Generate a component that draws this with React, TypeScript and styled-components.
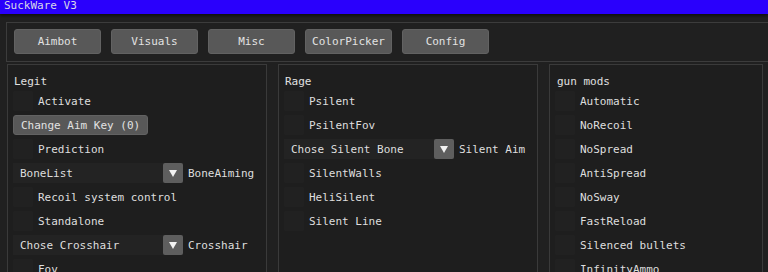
import React from 'react';
import styled, { createGlobalStyle } from 'styled-components';

const GlobalStyle = createGlobalStyle`
  html, body {
    margin: 0;
    padding: 0;
    background: #202020;
    overflow: hidden;
  }
  * {
    box-sizing: border-box;
  }
`;

const Window = styled.div`
  width: 768px;
  height: 272px;
  overflow: hidden;
  background: #202020;
  color: #dedede;
  font-family: 'DejaVu Sans Mono', 'Liberation Mono', monospace;
  font-size: 11px;
  line-height: 13px;
`;

const TitleBar = styled.div`
  height: 14px;
  background: #2a00fc;
  padding: 0 4px;
  line-height: 11px;
  color: #d8d8e8;
  box-shadow: 0 2px 3px rgba(0, 0, 0, 0.55);
  position: relative;
  z-index: 1;
`;

const Body = styled.div`
  padding: 8px 5px 0 6px;
`;

const TabFrame = styled.div`
  width: 772px;
  height: 40px;
  border: 1px solid #3c3c3c;
  background: #202020;
  padding: 6px 7px;
  display: flex;
  gap: 10px;
`;

const Button = styled.div<{ $width?: number }>`
  width: ${({ $width }) => ($width ? `${$width}px` : 'auto')};
  height: ${({ $width }) => ($width ? '25px' : '20px')};
  padding: 0 7px;
  background: #585858;
  border: 1px solid #626262;
  border-radius: 3px;
  display: flex;
  align-items: center;
  justify-content: ${({ $width }) => ($width ? 'center' : 'flex-start')};
  color: #e2e2e2;
  white-space: nowrap;
`;

const Columns = styled.div`
  margin-top: 2px;
  display: grid;
  grid-template-columns: 260px 260px 1fr;
  gap: 11px;
  padding-left: 1px;
`;

const Panel = styled.div`
  height: 220px;
  border: 1px solid #3a3a3a;
  background: #1e1e1e;
  padding: 10px 5px 0 5px;
`;

const Heading = styled.div<{ $indent: number }>`
  padding-left: ${({ $indent }) => $indent}px;
  margin-bottom: 3px;
  color: #e0e0e0;
`;

const List = styled.div`
  display: flex;
  flex-direction: column;
  gap: 4px;
`;

const Row = styled.div`
  height: 20px;
  display: flex;
  align-items: center;
  gap: 5px;
  white-space: nowrap;
`;

const CheckBox = styled.div`
  width: 20px;
  height: 20px;
  background: #212121;
  border-radius: 1px;
`;

const ComboBox = styled.div`
  width: 170px;
  height: 20px;
  display: flex;
  background: #232323;
`;

const ComboValue = styled.div`
  flex: 1;
  padding-left: 7px;
  display: flex;
  align-items: center;
`;

const ComboArrow = styled.div`
  width: 20px;
  height: 20px;
  background: #5e5e5e;
  border-radius: 2px;
  display: flex;
  align-items: center;
  justify-content: center;
`;

type Item =
  | { kind: 'check'; label: string }
  | { kind: 'button'; label: string }
  | { kind: 'combo'; value: string; label: string };

const panels: { title: string; indent: number; items: Item[] }[] = [
  {
    title: 'Legit',
    indent: 1,
    items: [
      { kind: 'check', label: 'Activate' },
      { kind: 'button', label: 'Change Aim Key (0)' },
      { kind: 'check', label: 'Prediction' },
      { kind: 'combo', value: 'BoneList', label: 'BoneAiming' },
      { kind: 'check', label: 'Recoil system control' },
      { kind: 'check', label: 'Standalone' },
      { kind: 'combo', value: 'Chose Crosshair', label: 'Crosshair' },
      { kind: 'check', label: 'Fov' },
    ],
  },
  {
    title: 'Rage',
    indent: 1,
    items: [
      { kind: 'check', label: 'Psilent' },
      { kind: 'check', label: 'PsilentFov' },
      { kind: 'combo', value: 'Chose Silent Bone', label: 'Silent Aim' },
      { kind: 'check', label: 'SilentWalls' },
      { kind: 'check', label: 'HeliSilent' },
      { kind: 'check', label: 'Silent Line' },
    ],
  },
  {
    title: 'gun mods',
    indent: 2,
    items: [
      { kind: 'check', label: 'Automatic' },
      { kind: 'check', label: 'NoRecoil' },
      { kind: 'check', label: 'NoSpread' },
      { kind: 'check', label: 'AntiSpread' },
      { kind: 'check', label: 'NoSway' },
      { kind: 'check', label: 'FastReload' },
      { kind: 'check', label: 'Silenced bullets' },
      { kind: 'check', label: 'InfinityAmmo' },
    ],
  },
];

const tabs = ['Aimbot', 'Visuals', 'Misc', 'ColorPicker', 'Config'];

function DownArrow() {
  return (
    <svg width="8" height="7" viewBox="0 0 8 7">
      <polygon points="0,0 8,0 4,7" fill="#f2f2f2" />
    </svg>
  );
}

function Control({ item }: { item: Item }) {
  if (item.kind === 'button') {
    return (
      <Row>
        <Button>{item.label}</Button>
      </Row>
    );
  }
  if (item.kind === 'combo') {
    return (
      <Row>
        <ComboBox>
          <ComboValue>{item.value}</ComboValue>
          <ComboArrow>
            <DownArrow />
          </ComboArrow>
        </ComboBox>
        <span>{item.label}</span>
      </Row>
    );
  }
  return (
    <Row>
      <CheckBox />
      <span>{item.label}</span>
    </Row>
  );
}

export default function App() {
  return (
    <>
      <GlobalStyle />
      <Window>
        <TitleBar>SuckWare V3</TitleBar>
        <Body>
          <TabFrame>
            {tabs.map((t) => (
              <Button key={t} $width={87}>
                {t}
              </Button>
            ))}
          </TabFrame>
          <Columns>
            {panels.map((p) => (
              <Panel key={p.title}>
                <Heading $indent={p.indent}>{p.title}</Heading>
                <List>
                  {p.items.map((item, i) => (
                    <Control key={i} item={item} />
                  ))}
                </List>
              </Panel>
            ))}
          </Columns>
        </Body>
      </Window>
    </>
  );
}
